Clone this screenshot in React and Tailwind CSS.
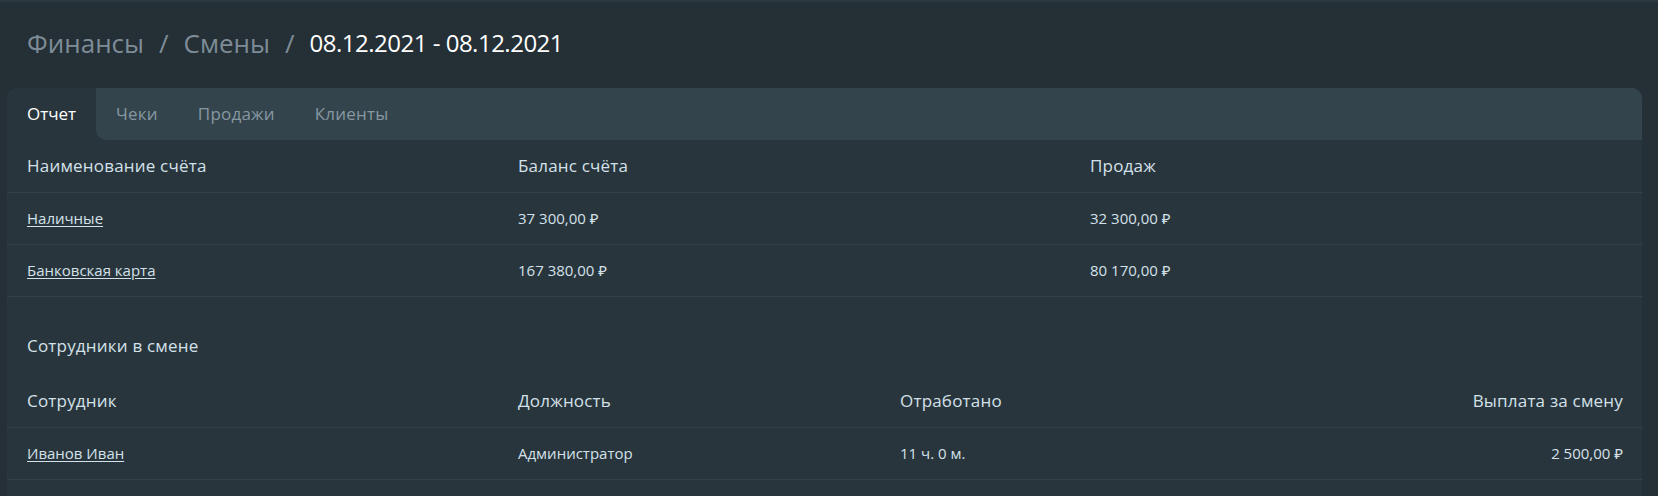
const accounts = [
  { name: "Наличные", balance: "37 300,00 ₽", sales: "32 300,00 ₽" },
  { name: "Банковская карта", balance: "167 380,00 ₽", sales: "80 170,00 ₽" },
];

const staff = [
  { name: "Иванов Иван", role: "Администратор", worked: "11 ч. 0 м.", pay: "2 500,00 ₽" },
];

const tabs = ["Чеки", "Продажи", "Клиенты"];

export default function App() {
  return (
    <div
      className="min-h-[496px] bg-[#252f36] border-t-2 border-[#2d3940] text-[#d3e1ea]"
      style={{ fontFamily: '"Open Sans", "Noto Sans", sans-serif' }}
    >
      {/* breadcrumbs */}
      <div className="flex items-center h-[86px] pl-[27px] pb-[4px] text-[26px] leading-8">
        <span className="text-[#7d8c96]">Финансы</span>
        <span className="text-[#7d8c96] mx-[15px]">/</span>
        <span className="text-[#7d8c96]">Смены</span>
        <span className="text-[#7d8c96] mx-[15px]">/</span>
        <span className="text-white text-[24px] tracking-[-0.5px]">08.12.2021 - 08.12.2021</span>
      </div>

      <div className="ml-[7px] mr-[16px] bg-[#29353c] rounded-t-[10px] pb-[16px]">
        {/* tabs */}
        <div className="flex h-[52px] text-[17px]">
          <div className="flex items-center px-5 text-white">Отчет</div>
          <div className="flex-1 flex items-center bg-[#33444d] rounded-bl-[10px] rounded-tr-[10px]">
            {tabs.map((t) => (
              <div key={t} className="px-5 text-[#8797a1] tracking-[0.2px]">
                {t}
              </div>
            ))}
          </div>
        </div>

        {/* accounts table */}
        <div className="grid grid-cols-[491px_572px_1fr] items-center h-[53px] px-5 border-b border-[#33414a] text-[17px] font-medium tracking-[0.2px]">
          <div>Наименование счёта</div>
          <div>Баланс счёта</div>
          <div>Продаж</div>
        </div>
        {accounts.map((a) => (
          <div
            key={a.name}
            className="grid grid-cols-[491px_572px_1fr] items-center h-[52px] px-5 border-b border-[#33414a] text-[15px]"
          >
            <div>
              <a href="#" className="underline underline-offset-2">
                {a.name}
              </a>
            </div>
            <div>{a.balance}</div>
            <div>{a.sales}</div>
          </div>
        ))}

        {/* staff */}
        <div className="pl-5 pt-[37px] pb-[17px] leading-6 text-[17px] font-medium tracking-[0.2px]">Сотрудники в смене</div>
        <div className="grid grid-cols-[491px_382px_1fr_1fr] items-center h-[53px] pl-5 pr-[19px] border-b border-[#33414a] text-[17px] font-medium tracking-[0.2px]">
          <div>Сотрудник</div>
          <div>Должность</div>
          <div>Отработано</div>
          <div className="text-right">Выплата за смену</div>
        </div>
        {staff.map((s) => (
          <div
            key={s.name}
            className="grid grid-cols-[491px_382px_1fr_1fr] items-center h-[52px] pl-5 pr-[19px] border-b border-[#33414a] text-[15px]"
          >
            <div>
              <a href="#" className="underline underline-offset-2">
                {s.name}
              </a>
            </div>
            <div>{s.role}</div>
            <div>{s.worked}</div>
            <div className="text-right">{s.pay}</div>
          </div>
        ))}
      </div>
    </div>
  );
}
